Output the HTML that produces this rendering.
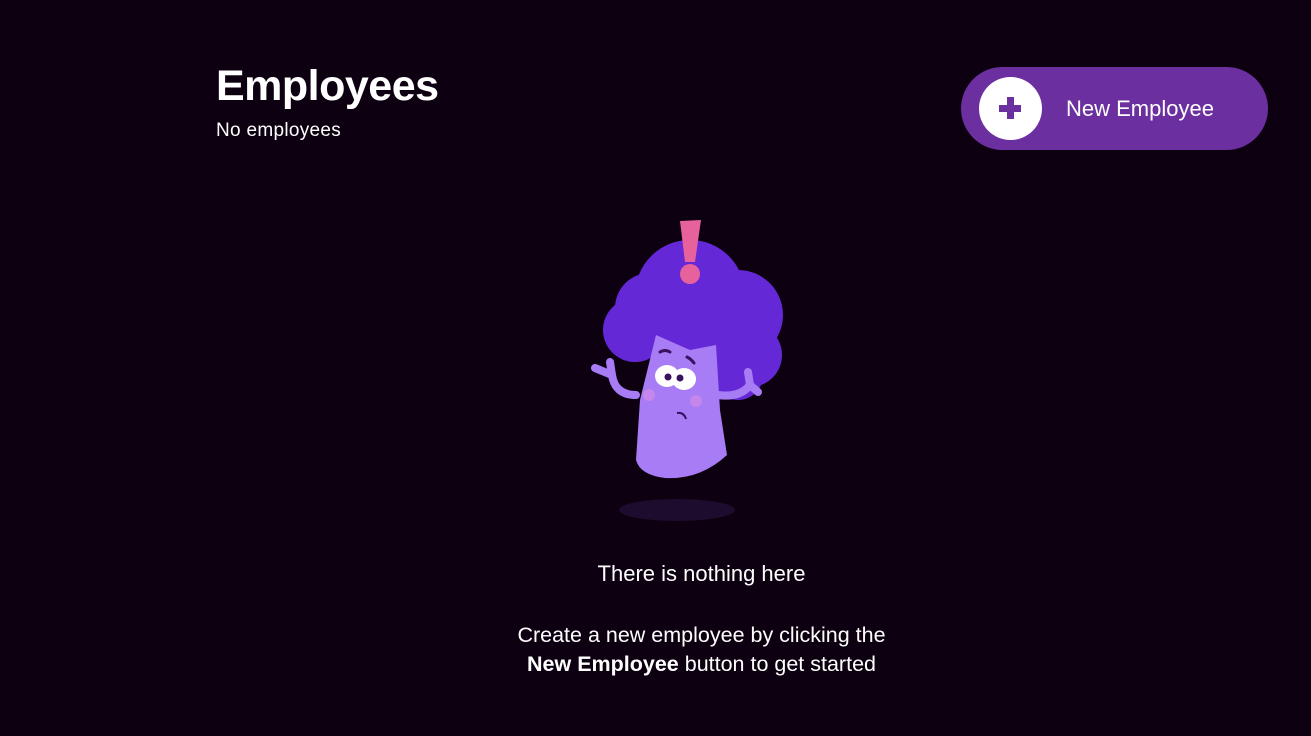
<!DOCTYPE html>
<html><head><meta charset="utf-8"><style>
html,body{margin:0;padding:0;width:1311px;height:736px;background:#0d0010;overflow:hidden;font-family:"Liberation Sans",sans-serif;color:#fff}
h1{position:absolute;left:216px;top:62px;margin:0;font-size:43px;font-weight:bold;letter-spacing:-0.5px}
.sub{position:absolute;left:216px;top:120px;font-size:19px;letter-spacing:0.3px}
.btn{position:absolute;left:961px;top:67px;width:307px;height:83px;border-radius:42px;background:#6b2fa0}
.circ{position:absolute;left:979px;top:77px;width:63px;height:63px;border-radius:50%;background:#fff}
.btxt{position:absolute;left:1066px;top:96px;font-size:22px}
.t1{position:absolute;left:0;width:1403px;top:561px;text-align:center;font-size:22px}
.t2{position:absolute;left:0;width:1403px;top:621px;text-align:center;font-size:21.5px;line-height:29px}
</style></head><body>
<h1>Employees</h1>
<div class="sub">No employees</div>
<div class="btn"></div>
<div class="circ"><svg width="63" height="63"><rect x="28" y="20" width="7" height="22" fill="#6b2fa0"/><rect x="20" y="28" width="22" height="7" fill="#6b2fa0"/></svg></div>
<div class="btxt">New Employee</div>
<svg style="position:absolute;left:0;top:0" width="1311" height="736">
<ellipse cx="677" cy="510" rx="58" ry="11" fill="#1e0c2e"/>
<g fill="#6528d6">
<circle cx="690" cy="295" r="55"/><circle cx="650" cy="308" r="35"/><circle cx="738" cy="315" r="45"/>
<circle cx="635" cy="330" r="32"/><circle cx="750" cy="355" r="32"/><circle cx="700" cy="335" r="50"/>
<circle cx="738" cy="375" r="25"/>
</g>
<path d="M656 335 L690 350 L716 345 L720 410 L727 455 Q700 480 665 478 Q640 475 636 460 L640 400 Z" fill="#a77cf5"/>
<path d="M636 395 Q615 395 612 375 M612 375 L595 368 M612 375 L610 362 M718 395 Q740 398 750 385 L758 392 M750 385 L748 372" stroke="#a77cf5" stroke-width="8" fill="none" stroke-linecap="round"/>
<ellipse cx="667" cy="376" rx="12" ry="11" fill="#fff"/><ellipse cx="684" cy="379" rx="12" ry="11" fill="#fff"/>
<circle cx="668" cy="377" r="3.5" fill="#3a1060"/><circle cx="680" cy="378" r="3.5" fill="#3a1060"/>
<circle cx="649" cy="395" r="6" fill="#d48ae8" opacity=".7"/><circle cx="696" cy="401" r="6" fill="#d48ae8" opacity=".7"/>
<path d="M677 413 Q684 412 686 419" stroke="#3a1060" stroke-width="2" fill="none"/>
<path d="M660 352 Q665 349 670 352 M687 357 Q691 359 694 363" stroke="#3a1060" stroke-width="3" fill="none" stroke-linecap="round"/>
<path d="M680 221 L701 220 L695 262 L685 262 Z" fill="#e7629d"/><circle cx="690" cy="274" r="10" fill="#e7629d"/>
</svg>
<div class="t1">There is nothing here</div>
<div class="t2">Create a new employee by clicking the<br><b>New Employee</b> button to get started</div>
</body></html>
